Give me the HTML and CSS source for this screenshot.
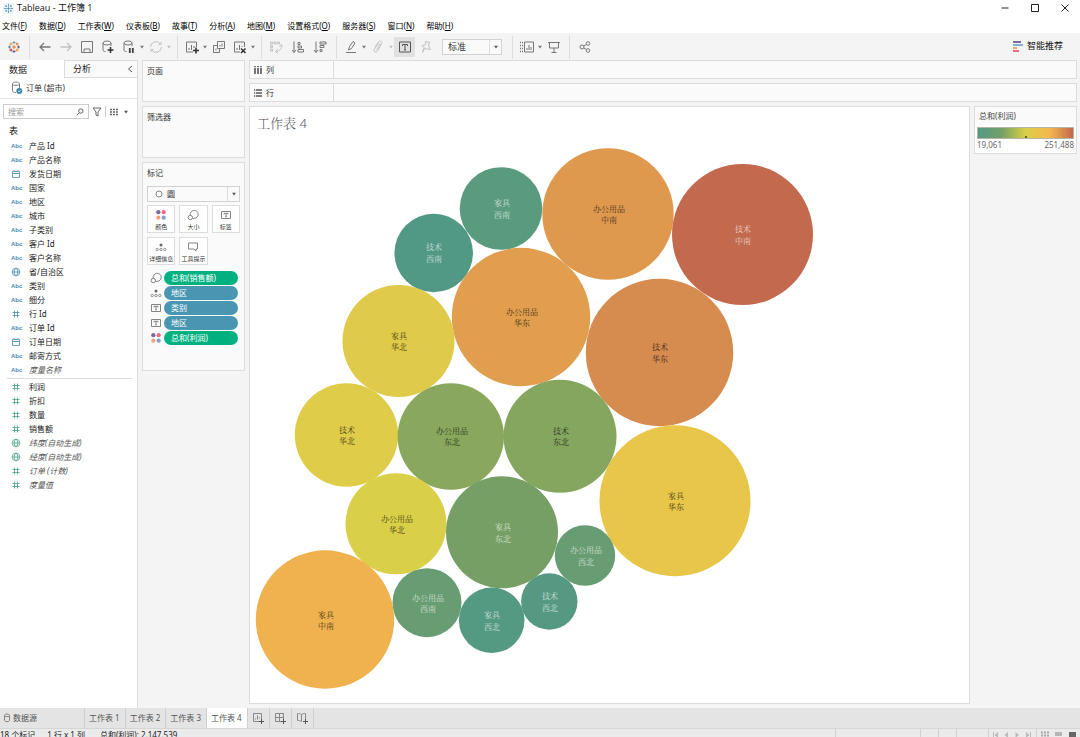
FILE: index.html
```html
<!DOCTYPE html>
<html lang="zh-CN">
<head>
<meta charset="utf-8">
<title>Tableau - 工作簿 1</title>
<link rel="stylesheet" href="styles.css">
</head>
<body>
<svg class="defs" width="0" height="0" aria-hidden="true">
  <symbol id="caret" viewBox="0 0 6 4"><path d="M1 .8h4L3 3.4z" fill="currentColor"/></symbol>
  <symbol id="cal" viewBox="0 0 10 10"><path d="M1.5 2.5h7v6h-7zM1.5 4.5h7M3 1v1.5M7 1v1.5" fill="none" stroke="currentColor" stroke-width=".8"/></symbol>
  <symbol id="globe" viewBox="0 0 10 10"><path d="M5 1.2a3.8 3.8 0 100 7.6 3.8 3.8 0 000-7.6zM1.2 5h7.6M5 1.2c-2.4 2-2.4 5.6 0 7.6M5 1.2c2.4 2 2.4 5.6 0 7.6" fill="none" stroke="currentColor" stroke-width=".8"/></symbol>
  <symbol id="hash" viewBox="0 0 10 10"><path d="M3.500 1.500v7M6.500 1.500v7M1.500 3.500h7M1.500 6.500h7" fill="none" stroke="currentColor" stroke-width=".8"/></symbol>
  <symbol id="dots" viewBox="0 0 12 12"><circle cx="3.300" cy="3.200" r="2.100" fill="#7b6a9b"/><circle cx="8.700" cy="3.200" r="2.100" fill="#f2697d"/><circle cx="3.300" cy="8.700" r="2.100" fill="#f5a278"/><circle cx="8.700" cy="8.700" r="2.100" fill="#7ba3cc"/></symbol>
  <symbol id="size" viewBox="0 0 12 12"><g fill="none" stroke="#777" stroke-width=".9"><path d="M3.300 6.200A4 4 0 117 9.300H5.500"/><circle cx="3.300" cy="8.500" r="2.200"/></g></symbol>
  <symbol id="detail" viewBox="0 0 12 12"><circle cx="6" cy="4" r="1.500" fill="#666"/><g fill="none" stroke="#777" stroke-width=".8"><circle cx="2.200" cy="8.500" r="1.200"/><circle cx="6" cy="8.500" r="1.200"/><circle cx="9.800" cy="8.500" r="1.200"/></g></symbol>
  <symbol id="label" viewBox="0 0 12 12"><path d="M1.500 2.500h9v7h-9zM4 5.300V4.300h4v1M6 4.300v3.500M5.200 7.800h1.600" fill="none" stroke="#777" stroke-width=".9"/></symbol>
  <symbol id="tip" viewBox="0 0 12 12"><path d="M1.500 2h9v6H9v2L7 8H1.500z" fill="none" stroke="#777" stroke-width=".9"/></symbol>
  <symbol id="cyl" viewBox="0 0 12 14"><path d="M1.500 3v7c0 1 1.500 1.500 3.500 1.500M8.500 3v4M5 1C3 1 1.500 1.800 1.500 3S3 4.500 5 4.500 8.500 4 8.500 3 7 1 5 1z" fill="none" stroke="currentColor" stroke-width=".9"/></symbol>
</svg>

<header class="titlebar">
  <svg class="app-icon" viewBox="0 0 12 12" fill="none"><rect width="12" height="12" fill="#eef3f6"/><path d="M6 1v3M6 8v3M1 6h3M8 6h3M4.500 6h3M6 4.500v3M3.500 2.500v2M2.500 3.500h2M8.500 2.500v2M7.500 3.500h2M3.500 7.500v2M2.500 8.500h2M8.500 7.500v2M7.500 8.500h2" stroke="#4b8db3" stroke-width=".9"/></svg>
  <h1 class="app-title">Tableau - 工作簿 1</h1>
  <div class="window-controls">
    <button aria-label="最小化"><svg viewBox="0 0 8 8"><path d="M.5 4h7"/></svg></button>
    <button aria-label="最大化"><svg viewBox="0 0 8 8"><path d="M.5.5h7v7h-7z"/></svg></button>
    <button aria-label="关闭"><svg viewBox="0 0 8 8"><path d="M.5.5l7 7M7.500.5l-7 7"/></svg></button>
  </div>
</header>

<nav class="menubar">
  <button>文件(<u>F</u>)</button><button>数据(<u>D</u>)</button><button>工作表(<u>W</u>)</button><button>仪表板(<u>B</u>)</button><button>故事(<u>T</u>)</button><button>分析(<u>A</u>)</button><button>地图(<u>M</u>)</button><button>设置格式(<u>O</u>)</button><button>服务器(<u>S</u>)</button><button>窗口(<u>N</u>)</button><button>帮助(<u>H</u>)</button>
</nav>

<div class="toolbar">
  <div class="tools home"><button aria-label="开始页面"><svg viewBox="0 0 14 14"><path d="M7 5v4M5 7h4" stroke="#e8762d"/><path d="M7 1v3M5.500 2.500h3" stroke="#7199a6"/><path d="M7 10v3M5.500 11.500h3" stroke="#5b6591"/><path d="M2.500 5.500v3M1 7h3" stroke="#5b879b"/><path d="M11.500 5.500v3M10 7h3" stroke="#5b6591"/><path d="M4 2.500v3M2.500 4h3" stroke="#eb912c"/><path d="M10 2.500v3M8.500 4h3" stroke="#e8762d"/><path d="M4 8.500v3M2.500 10h3" stroke="#c72035"/><path d="M10 8.500v3M8.500 10h3" stroke="#eb912c"/></svg></button></div>
  <div class="tools history">
    <button aria-label="撤消"><svg viewBox="0 0 14 14"><path d="M2 7h10.500M6 3L2 7l4 4" stroke-width="1.300"/></svg></button>
    <button class="off" aria-label="重做"><svg viewBox="0 0 14 14"><path d="M1.500 7H12M8 3l4 4-4 4" stroke-width="1.300"/></svg></button>
    <button aria-label="保存"><svg viewBox="0 0 14 14"><path d="M1.500 1.500h11v11h-11zM4 12V9h6v3"/></svg></button>
    <button aria-label="新建数据源"><svg viewBox="0 0 14 14"><ellipse cx="6" cy="3" rx="4" ry="2"/><path d="M2 3v7c0 1 1 1.500 2.500 1.500M10 3v3"/><path d="M9.500 7v6M6.500 10h6" stroke="#333" stroke-width="1.600"/></svg></button>
    <button aria-label="暂停自动更新"><svg viewBox="0 0 14 14"><ellipse cx="6" cy="3" rx="4" ry="2"/><path d="M2 3v7c0 1 1 1.500 2.500 1.500M10 3v3"/><path d="M7.800 8v5M10.800 8v5" stroke="#444" stroke-width="1.800"/></svg></button>
    <button class="drop" aria-label="更新选项"><svg><use href="#caret"/></svg></button>
    <button class="off" aria-label="运行更新"><svg viewBox="0 0 14 14"><path d="M1.500 7a5.500 5.500 0 0110-3M12.500 7a5.500 5.500 0 01-10 3M9.500 4.500h2.500V2M4.500 9.500H2V12"/></svg></button>
    <button class="drop off" aria-label="运行选项"><svg><use href="#caret"/></svg></button>
  </div>
  <div class="tools sheets">
    <button aria-label="新建工作表"><svg viewBox="0 0 14 14"><path d="M8 12H1.500V2h10v5M4 10V8M6.500 10V5M9 8V6"/><path d="M11 7.500v6M8 10.500h6" stroke="#333" stroke-width="1.600"/></svg></button>
    <button class="drop" aria-label="新建选项"><svg><use href="#caret"/></svg></button>
    <button aria-label="复制"><svg viewBox="0 0 14 14"><path d="M5.500 1.500h7v7h-7zM5 5.500H1.500v7h6V9M8 6.500V5M10 6.500v-3M4 10.500v-2"/></svg></button>
    <button aria-label="清除工作表"><svg viewBox="0 0 14 14"><path d="M7 12H1.500V2h10v5M4 10V8M6.500 10V5M9 7V6"/><path d="M8 8.500l4.500 4.500M12.500 8.500L8 13" stroke="#333" stroke-width="1.500"/></svg></button>
    <button class="drop" aria-label="清除选项"><svg><use href="#caret"/></svg></button>
  </div>
  <div class="tools sort">
    <button class="off" aria-label="交换行和列"><svg viewBox="0 0 14 14"><path d="M1.500 2h2v2h-2zM5 2h2v2H5zM8.500 2h2v2h-2zM1.500 5.500h2v2h-2zM1.500 9h2v2h-2zM12 5c1 4-1 6-5 6.500M9 9l-2.500 2.500L9 13.500M10.500 6.500L12 4.500l1.500 2"/></svg></button>
    <button aria-label="升序排序"><svg viewBox="0 0 14 14"><path d="M3 1.500v11M1 10l2 2.500L5 10M7 2.500h2v2H7zM7 6h3.500v2H7zM7 9.500h5.500v2.500H7z"/></svg></button>
    <button aria-label="降序排序"><svg viewBox="0 0 14 14"><path d="M3 1.500v11M1 10l2 2.500L5 10M7 2h6v2H7zM7 5.500h4v2H7zM7 9.500h2v2H7z"/></svg></button>
  </div>
  <div class="tools format">
    <button aria-label="突出显示"><svg viewBox="0 0 14 14"><path d="M4.500 10l1-3.500L9 1.500 11 3 7.500 8.500zM2 12.500h10"/></svg></button>
    <button class="drop" aria-label="突出显示选项"><svg><use href="#caret"/></svg></button>
    <button class="off" aria-label="组成员"><svg viewBox="0 0 14 14"><path d="M4 7l3.500-5c1.500-2 4.500-.3 3 2L6.500 11c-1.500 2.300-4.500.5-3-2L7 4.200c1-1.200 2.400-.2 1.700.9L5.500 9.700"/></svg></button>
    <button class="drop off" aria-label="组选项"><svg><use href="#caret"/></svg></button>
    <button class="on" aria-label="显示标记标签"><svg viewBox="0 0 14 14"><path d="M1.500 2h11v10h-11zM4.500 6V4.500h5V6M7 4.500V10M6 10h2"/></svg></button>
    <button class="off" aria-label="固定轴"><svg viewBox="0 0 14 14"><path d="M6.500 1.500l4.500 1-1.500 1.500.5 3 1.500 2.500-4-.5L6 8 3.500 12.500 5 7.500 3 5.500l3-.5 1-2z"/></svg></button>
    <div class="combo fit"><select aria-label="适合"><option>标准</option></select><span class="arrow"><svg><use href="#caret"/></svg></span></div>
  </div>
  <div class="tools display">
    <button aria-label="显示/隐藏卡"><svg viewBox="0 0 14 14"><path d="M0 2.500h3M0 5.500h3M0 8.500h3M0 11.500h3" stroke-dasharray="1 1" stroke-width="1.500"/><path d="M4.500 2h9v10h-9zM7 10V8M9 10V5M11 10V7"/></svg></button>
    <button class="drop" aria-label="卡选项"><svg><use href="#caret"/></svg></button>
    <button aria-label="演示模式"><svg viewBox="0 0 14 14"><path d="M1 2.500h12M2.500 2.500V8h9V2.500M7 8v4M4.500 12.500h5"/></svg></button>
  </div>
  <div class="tools share"><button aria-label="共享"><svg viewBox="0 0 14 14"><circle cx="4" cy="7" r="2"/><circle cx="10" cy="3.500" r="1.800"/><circle cx="10" cy="10.500" r="1.800"/><path d="M5.800 6L8.400 4.500M5.800 8l2.600 1.500"/></svg></button></div>
  <button class="show-me"><svg viewBox="0 0 10 11"><path d="M0 1h8" stroke="#7b6a9b" stroke-width="2"/><path d="M0 4h10" stroke="#85afd2" stroke-width="2"/><path d="M0 7h4" stroke="#f5a278" stroke-width="2"/><path d="M0 10h6" stroke="#f2697d" stroke-width="2"/></svg>智能推荐</button>
</div>

<div class="workspace">
  <aside class="side">
    <div class="side-tabs">
      <button class="side-tab active">数据</button>
      <button class="side-tab">分析<svg viewBox="0 0 6 8"><path d="M5 1L1.500 4 5 7" fill="none" stroke="#555"/></svg></button>
    </div>
    <button class="source"><svg viewBox="0 0 12 14"><use href="#cyl"/><circle cx="8.300" cy="10" r="3" fill="#3e86ad"/><path d="M7 10l1 1 1.700-2" fill="none" stroke="#fff" stroke-width=".7"/></svg>订单 (超市)</button>
    <div class="find">
      <label class="search"><input type="text" placeholder="搜索" aria-label="搜索"><svg viewBox="0 0 8 8"><path d="M4.800.8a2.200 2.200 0 100 4.400 2.200 2.200 0 000-4.400zM3.200 4.800L.8 7.200" fill="none" stroke="#666"/></svg></label>
      <button class="filter" aria-label="筛选"><svg viewBox="0 0 10 10"><path d="M1 1h8L6 5v4L4 8V5z" fill="none" stroke="#666"/></svg></button>
      <button class="view" aria-label="视图"><svg viewBox="0 0 10 8"><path d="M1 1.500h8M1 4h8M1 6.500h8" stroke="#666" stroke-width="1.500" stroke-dasharray="2 1"/></svg><svg class="tiny"><use href="#caret"/></svg></button>
    </div>
    <h2 class="table-head">表</h2>
    <ul class="fields dims">
      <li><b>Abc</b>产品 Id</li>
      <li><b>Abc</b>产品名称</li>
      <li><svg><use href="#cal"/></svg>发货日期</li>
      <li><b>Abc</b>国家</li>
      <li><b>Abc</b>地区</li>
      <li><b>Abc</b>城市</li>
      <li><b>Abc</b>子类别</li>
      <li><b>Abc</b>客户 Id</li>
      <li><b>Abc</b>客户名称</li>
      <li><svg><use href="#globe"/></svg>省/自治区</li>
      <li><b>Abc</b>类别</li>
      <li><b>Abc</b>细分</li>
      <li><svg><use href="#hash"/></svg>行 Id</li>
      <li><b>Abc</b>订单 Id</li>
      <li><svg><use href="#cal"/></svg>订单日期</li>
      <li><b>Abc</b>邮寄方式</li>
      <li><b>Abc</b><i>度量名称</i></li>
    </ul>
    <ul class="fields measures">
      <li><svg><use href="#hash"/></svg>利润</li>
      <li><svg><use href="#hash"/></svg>折扣</li>
      <li><svg><use href="#hash"/></svg>数量</li>
      <li><svg><use href="#hash"/></svg>销售额</li>
      <li><svg><use href="#globe"/></svg><i>纬度(自动生成)</i></li>
      <li><svg><use href="#globe"/></svg><i>经度(自动生成)</i></li>
      <li><svg><use href="#hash"/></svg><i>订单 (计数)</i></li>
      <li><svg><use href="#hash"/></svg><i>度量值</i></li>
    </ul>
  </aside>

  <div class="cards">
    <section class="card pages"><h2>页面</h2></section>
    <section class="card filters"><h2>筛选器</h2></section>
    <section class="card marks">
      <h2>标记</h2>
      <div class="combo mark-type"><svg class="ring" viewBox="0 0 8 8"><circle cx="4" cy="4" r="3" fill="none" stroke="#777" stroke-width=".9"/></svg><select aria-label="标记类型"><option>圆</option></select><span class="arrow"><svg><use href="#caret"/></svg></span></div>
      <div class="shelf-buttons">
        <button><svg><use href="#dots"/></svg>颜色</button>
        <button><svg><use href="#size"/></svg>大小</button>
        <button><svg><use href="#label"/></svg>标签</button>
        <button><svg><use href="#detail"/></svg>详细信息</button>
        <button><svg><use href="#tip"/></svg>工具提示</button>
      </div>
      <ul class="pills">
        <li><svg><use href="#size"/></svg><button class="pill measure">总和(销售额)</button></li>
        <li><svg><use href="#detail"/></svg><button class="pill">地区</button></li>
        <li><svg><use href="#label"/></svg><button class="pill">类别</button></li>
        <li><svg><use href="#label"/></svg><button class="pill">地区</button></li>
        <li><svg><use href="#dots"/></svg><button class="pill measure">总和(利润)</button></li>
      </ul>
    </section>
  </div>

  <main class="stage">
    <div class="shelf"><div class="shelf-name"><svg viewBox="0 0 8 8"><path d="M1 0v1.200M4 0v1.200M7 0v1.200M1 2v6M4 2v6M7 2v6" stroke="#555" stroke-width="1.600"/></svg>列</div></div>
    <div class="shelf"><div class="shelf-name"><svg viewBox="0 0 8 8"><path d="M0 1h1.200M0 4h1.200M0 7h1.200M2 1h6M2 4h6M2 7h6" stroke="#555" stroke-width="1.400"/></svg>行</div></div>
    <div class="result">
      <section class="sheet">
        <h2>工作表 4</h2>
        <svg class="bubbles" viewBox="250 139 719 563" preserveAspectRatio="xMinYMin meet" role="img" aria-label="按类别和地区划分的销售额">
          <g>
            <circle cx="501" cy="208.500" r="41.300" fill="#5a9b80"/><circle cx="608" cy="214" r="65.700" fill="#df994f"/>
            <circle cx="742.500" cy="234.500" r="70.500" fill="#c3694d"/><circle cx="433.700" cy="253" r="39.300" fill="#519985"/>
            <circle cx="521" cy="317" r="69.200" fill="#e19e4e"/><circle cx="398.500" cy="341" r="56" fill="#dfcb49"/>
            <circle cx="659.500" cy="352.500" r="73.700" fill="#d68b4f"/><circle cx="346.500" cy="435" r="51.700" fill="#dfcc48"/>
            <circle cx="450.800" cy="436.500" r="53.200" fill="#89a85e"/><circle cx="560" cy="436.300" r="56.500" fill="#85a65f"/>
            <circle cx="675" cy="500.800" r="75.500" fill="#e8c64a"/><circle cx="396" cy="523.800" r="50.500" fill="#dacf48"/>
            <circle cx="502" cy="532.300" r="56" fill="#759f65"/><circle cx="585" cy="555.500" r="30.200" fill="#689c72"/>
            <circle cx="549.300" cy="601.500" r="28.200" fill="#569983"/><circle cx="491.700" cy="620.300" r="32.800" fill="#549982"/>
            <circle cx="427" cy="602.700" r="34.500" fill="#689c72"/><circle cx="325" cy="619.500" r="69.200" fill="#f0b24e"/>
          </g>
          <g class="on-dark">
            <text x="502" y="206">家具</text><text x="502" y="218">西南</text>
            <text x="743" y="232">技术</text><text x="743" y="244">中南</text>
            <text x="434" y="250">技术</text><text x="434" y="262">西南</text>
            <text x="503" y="530">家具</text><text x="503" y="542">东北</text>
            <text x="586" y="553">办公用品</text><text x="586" y="565">西北</text>
            <text x="550" y="599">技术</text><text x="550" y="611">西北</text>
            <text x="492" y="618">家具</text><text x="492" y="630">西北</text>
            <text x="428" y="601">办公用品</text><text x="428" y="612">西南</text>
          </g>
          <g class="on-light">
            <text x="609" y="212">办公用品</text><text x="609" y="223">中南</text>
            <text x="522" y="315">办公用品</text><text x="522" y="326">华东</text>
            <text x="399" y="339">家具</text><text x="399" y="350">华北</text>
            <text x="660" y="350">技术</text><text x="660" y="362">华东</text>
            <text x="347" y="433">技术</text><text x="347" y="444">华北</text>
            <text x="452" y="434">办公用品</text><text x="452" y="445">东北</text>
            <text x="561" y="434">技术</text><text x="561" y="445">东北</text>
            <text x="676" y="499">家具</text><text x="676" y="510">华东</text>
            <text x="397" y="522">办公用品</text><text x="397" y="533">华北</text>
            <text x="326" y="618">家具</text><text x="326" y="629">中南</text>
          </g>
        </svg>
      </section>
      <aside class="legend">
        <h2>总和(利润)</h2>
        <div class="scale">
          <div class="ramp"><span></span></div>
          <div class="range"><span>19,061</span><span>251,488</span></div>
        </div>
      </aside>
    </div>
  </main>
</div>

<nav class="sheet-tabs">
  <button class="data-source"><svg viewBox="0 0 8 10"><path d="M1.500 2.500v5C1.500 9 6.500 9 6.500 7.500v-5C6.500.5 1.500.5 1.500 2.500zM1.500 2.500c0 1.500 5 1.500 5 0" fill="none" stroke="#777" stroke-width=".9"/></svg>数据源</button>
  <button class="tab">工作表 1</button><button class="tab">工作表 2</button><button class="tab">工作表 3</button><button class="tab active">工作表 4</button>
  <button class="add" aria-label="新建工作表"><svg viewBox="0 0 12 12"><path d="M7 9.500H1.500v-8h8V7M3.500 7.500v-1M5.500 7.500v-4M7.500 6.500v-1"/><path d="M9.500 7v5M7 9.500h5" class="plus"/></svg></button>
  <button class="add" aria-label="新建仪表板"><svg viewBox="0 0 12 12"><path d="M7 9.500H1.500v-8h8V7M5.500 1.500v8M1.500 5.500h8"/><path d="M9.500 7v5M7 9.500h5" class="plus"/></svg></button>
  <button class="add" aria-label="新建故事"><svg viewBox="0 0 12 12"><path d="M5.500 2.500C4 1.500 3 1.500 1.500 1.500v7c1.500 0 2.500 0 4 1zM5.500 2.500c1.500-1 2.500-1 4-1V7"/><path d="M9.500 7v5M7 9.500h5" class="plus"/></svg></button>
</nav>

<footer class="status">
  <span class="count">18 个标记</span><span class="dims-count">1 行 x 1 列</span><span class="total">总和(利润): 2,147,539</span>
  <span class="slot wide"></span><span class="slot"></span><span class="slot"></span><span class="slot mid"></span>
  <span class="slot pager"><svg viewBox="0 0 40 8" fill="#bbb"><path d="M1 1h1v6H1zM6 1v6L2.500 4zM16 1v6l-3.500-3zM23.500 1v6L27 4zM34 1v6l3.500-3zM38 1h1v6h-1z"/></svg></span>
  <span class="slot modes"><svg viewBox="0 0 38 8"><path d="M1 1.500h8M1 4.500h8M1 7.500h8" stroke="#aaa" stroke-width="2" stroke-dasharray="2 1"/><path d="M15 1h7v4h-7zM15 6h7v2h-7z" fill="#b5b5b5"/><path d="M29 1h7v7h-7z" fill="#666"/></svg></span>
</footer>
</body>
</html>
```
FILE: styles.css
```css
* { box-sizing: border-box; }
html { height: 100%; }
body {
  margin: 0;
  height: 100%;
  display: flex;
  flex-direction: column;
  overflow: hidden;
  background: #f4f4f4;
  color: #222;
  font: 8px/12px "Noto Sans", "Noto Sans CJK SC", sans-serif;
}
h1, h2, ul { margin: 0; padding: 0; font-size: inherit; font-weight: 400; }
ul { list-style: none; }
button, select, input { font: inherit; color: inherit; background: none; border: 0; padding: 0; margin: 0; }
button { display: flex; align-items: center; white-space: nowrap; }
svg { display: block; flex: none; }
.defs { position: absolute; }

.titlebar { flex: none; display: flex; align-items: center; height: 16px; padding-left: 3px; background: #fff; }
.app-icon { width: 11px; height: 11px; }
.app-title { margin-left: 3px; font-family: "Open Sans", "Noto Sans CJK SC", sans-serif; font-size: 9px; color: #111; }
.window-controls { display: flex; margin-left: auto; }
.window-controls button { width: 30px; height: 16px; justify-content: center; }
.window-controls svg { width: 8px; height: 8px; fill: none; stroke: #222; }

.menubar { flex: none; display: flex; gap: 12px; height: 17px; padding: 2px 2px 0; background: #fff; color: #000; }

.toolbar { flex: none; display: flex; height: 27px; }
.tools { display: flex; align-items: center; margin: 3px 0 1px; padding: 0 5px 2px 3px; border-right: 1px solid #dedede; }
.tools button { width: 21px; height: 20px; justify-content: center; color: #777; }
.tools button.drop { width: 6px; }
.tools button.off { color: #c2c2c2; }
.tools button.on { background: #e1e1e1; color: #555; }
.tools svg { width: 14px; height: 14px; fill: none; stroke: currentColor; }
.tools .drop svg, .arrow svg, .tools .arrow svg, .tiny { width: 6px; height: 4px; stroke: none; }
.tools.home { padding-right: 5px; padding-left: 3px; }
.tools.history { padding-left: 4px; }
.tools.sort { gap: 1px; padding-right: 6px; }
.tools.format { padding-right: 10px; }
.tools.share { border: 0; padding-left: 4px; }
.show-me { margin-left: auto; padding: 0 17px 1px 0; gap: 4px; font-size: 9px; color: #111; }
.show-me svg { width: 10px; height: 11px; }

.combo { display: flex; align-items: center; height: 16px; border: 1px solid #d2d2d2; background: #fafafa; color: #333; }
.combo select { flex: 1; min-width: 0; height: 14px; appearance: none; outline: 0; }
.combo .arrow { align-self: stretch; width: 12px; display: flex; align-items: center; justify-content: center; border-left: 1px solid #ddd; color: #555; pointer-events: none; }
.fit { width: 60px; margin-left: 6px; padding-left: 5px; font-size: 9px; }

.workspace { flex: 1; min-height: 0; display: flex; gap: 4px; padding-right: 3px; }
.side { flex: none; width: 138px; background: #fff; border-right: 1px solid #dcdcdc; }
.side-tabs { display: flex; height: 18px; font-size: 9px; }
.side-tab { flex: 1; justify-content: space-between; padding: 0 4px 0 8px; background: #fafafa; border: solid #dcdcdc; border-width: 1px 0 1px 1px; }
.side-tab.active { flex: none; width: 64px; padding: 2px 9px 0; background: #fff; border: 0; }
.side-tab svg { width: 6px; height: 8px; }
.source { width: 100%; height: 21px; gap: 3px; padding-left: 11px; border-bottom: 1px solid #e6e6e6; color: #333; }
.source svg { width: 12px; height: 14px; color: #777; }
.find { display: flex; align-items: center; height: 25px; padding-left: 3px; }
.search { display: flex; align-items: center; width: 86px; height: 15px; padding: 0 4px; border: 1px solid #ccc; }
.search input { flex: 1; min-width: 0; outline: 0; }
.search input::placeholder { color: #999; }
.search svg { width: 8px; height: 8px; }
.filter { width: 17px; height: 11px; justify-content: center; border-right: 1px solid #ccc; }
.filter svg { width: 10px; height: 10px; }
.view { gap: 4px; margin-left: 3px; color: #555; }
.view svg { width: 10px; height: 8px; }
.view .tiny { width: 6px; height: 4px; }
.table-head { height: 15px; padding: 1px 0 0 9px; font-size: 9px; color: #111; }
.fields li { display: flex; align-items: center; height: 14px; padding-left: 11px; }
.fields b { width: 18px; font: 700 6px/12px "Liberation Sans", sans-serif; color: #4a8cab; }
.fields svg { width: 10px; height: 10px; margin-right: 8px; color: #4a8cab; }
.fields i { color: #555; }
.dims { margin: 0 5px 0 7px; padding-bottom: 1px; border-bottom: 1px solid #dedede; }
.dims li { padding-left: 4px; }
.measures { padding-top: 1px; }
.measures svg { color: #4aa583; }

.cards { flex: none; width: 103px; display: flex; flex-direction: column; gap: 4px; color: #333; }
.card { padding: 4px; background: #fafafa; border: 1px solid #dcdcdc; }
.pages { height: 42px; }
.filters { height: 52px; }
.marks { min-height: 209px; }
.mark-type { margin-top: 7px; }
.mark-type .ring { width: 8px; height: 8px; margin: 0 4px 0 7px; }
.shelf-buttons { display: grid; grid-template-columns: repeat(3, 1fr); gap: 4px; margin-top: 3px; }
.shelf-buttons button { flex-direction: column; justify-content: space-between; height: 28px; min-width: 0; padding-top: 3px; border: 1px solid #ddd; background: #fff; font-size: 6px; line-height: 9px; }
.shelf-buttons svg { width: 12px; height: 12px; }
.pills { display: grid; gap: 1px; margin: 6px 2px 0 3px; }
.pills li { display: flex; align-items: center; gap: 2px; }
.pills svg { width: 12px; height: 12px; }
.pill { flex: 1; height: 14px; padding-left: 7px; border-radius: 7px; background: #4996b2; color: #fff; }
.pill.measure { background: #00b180; }

.stage { flex: 1; min-width: 0; display: flex; flex-direction: column; gap: 4px; padding-bottom: 4px; }
.shelf { flex: none; height: 19px; display: flex; background: #fafafa; border: 1px solid #dcdcdc; }
.shelf-name { width: 84px; display: flex; align-items: center; gap: 4px; padding-left: 4px; border-right: 1px solid #dcdcdc; color: #333; }
.shelf-name svg { width: 8px; height: 8px; }
.result { flex: 1; min-height: 0; display: flex; align-items: flex-start; gap: 4px; }
.sheet { flex: 1; min-width: 0; align-self: stretch; display: flex; flex-direction: column; background: #fff; border: 1px solid #dcdcdc; }
.sheet h2 { flex: none; height: 32px; padding: 6px 7px; font: 300 13px/20px "Noto Sans", "Noto Serif CJK SC", "Noto Sans CJK SC", sans-serif; color: #555; }
.bubbles { flex: 1; min-height: 0; width: 100%; font: 8px "Noto Serif CJK SC", "Noto Sans CJK SC", serif; text-anchor: middle; }
.on-dark { fill: #fff; fill-opacity: .7; }
.on-light { fill: #000; fill-opacity: .75; }
.legend { flex: none; width: 103px; background: #fff; border: 1px solid #dcdcdc; color: #444; }
.legend h2 { padding: 3px 4px; background: #fafafa; }
.scale { padding: 2px; }
.ramp { height: 12px; display: flex; align-items: flex-end; justify-content: center; border: 1px solid #b5b5a5; background: linear-gradient(90deg, #529985, #75a066 25%, #dbcf47 50%, #f4b84e 75%, #c2694d); }
.ramp span { width: 2px; height: 2px; background: #665d28; }
.range { display: flex; justify-content: space-between; color: #666; }

.sheet-tabs { flex: none; display: flex; height: 20px; background: #e4e4e4; color: #555; }
.sheet-tabs button { border-right: 1px solid #cfcfcf; }
.sheet-tabs .data-source { width: 85px; gap: 2px; padding-left: 3px; }
.data-source svg { width: 8px; height: 10px; }
.sheet-tabs .tab { padding: 0 5px 0 4px; }
.sheet-tabs .active { background: #fff; }
.sheet-tabs .add { width: 22px; justify-content: center; }
.add svg { width: 12px; height: 12px; fill: none; stroke: #888; }
.add .plus { stroke: #555; }

.status { flex: none; display: flex; height: 9px; border-top: 1px solid #d5d5d5; background: #ebebeb; color: #222; overflow: hidden; }
.dims-count { margin: 0 15px 0 12px; }
.slot { width: 18px; height: 14px; border-left: 1px solid #d0d0d0; }
.wide { width: 85px; margin-left: auto; }
.mid { width: 32px; }
.pager { width: 48px; padding: 2px 3px; }
.pager svg { width: 40px; height: 8px; }
.modes { width: 44px; padding: 2px 3px; }
.modes svg { width: 38px; height: 8px; }
```
